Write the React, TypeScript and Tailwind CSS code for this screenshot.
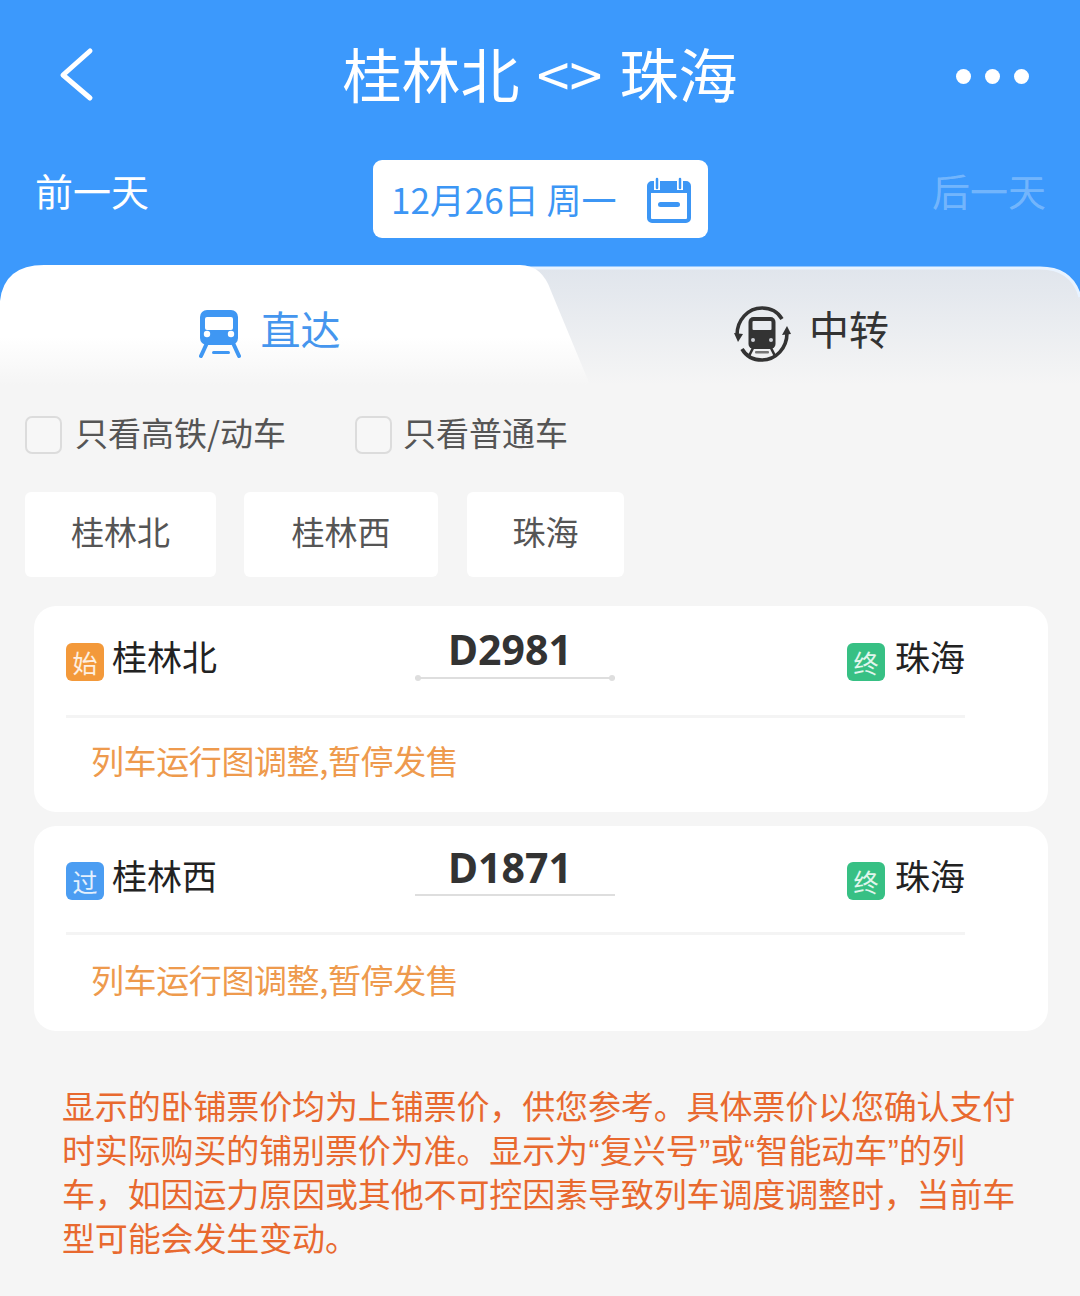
const FONT = "font-['Noto_Sans_CJK_SC','Noto_Sans',sans-serif]";

const trains = [
  {
    from: "桂林北",
    tag: "始",
    tagClass: "bg-[#f3993a]",
    code: "D2981",
    dots: true,
    cardClass: "h-[206px]",
    headClass: "h-[112px]",
    stationClass: "top-[37px]",
    codeClass: "leading-[56px]",
    noteClass: "pt-[22px]",
  },
  {
    from: "桂林西",
    tag: "过",
    tagClass: "bg-[#4b9df2]",
    code: "D1871",
    dots: false,
    cardClass: "h-[205px]",
    headClass: "h-[109px]",
    stationClass: "top-[36px]",
    codeClass: "leading-[53px]",
    noteClass: "pt-[24px]",
  },
];

const chips = [
  { name: "桂林北", className: "w-[191px]" },
  { name: "桂林西", className: "w-[194px]" },
  { name: "珠海", className: "ml-[1px] w-[157px]" },
];

function CalendarIcon() {
  return (
    <svg width="46" height="46" viewBox="0 0 46 46" fill="none">
      <rect x="3" y="6" width="40" height="38" rx="3" stroke="#3c96f5" strokeWidth="4" />
      <path d="M3 6h40v10H3z" fill="#3c96f5" />
      <path d="M11 2v11M34 2v11" stroke="white" strokeWidth="6" />
      <path d="M11 2v9M34 2v9" stroke="#3c96f5" strokeWidth="2.5" strokeLinecap="round" />
      <rect x="12" y="25" width="22" height="5" rx="2.5" fill="#3c96f5" />
    </svg>
  );
}

function DirectIcon() {
  return (
    <svg width="44" height="48" viewBox="0 0 44 48" fill="none">
      <path d="M9 33 3 46M35 33l6 13" stroke="#3f97f3" strokeWidth="4" strokeLinecap="round" />
      <rect x="14" y="41" width="18" height="3" rx="1.5" fill="#3f97f3" />
      <rect x="2" y="0" width="38" height="35" rx="7" fill="#3f97f3" />
      <rect x="7" y="7" width="28" height="13" rx="2" fill="white" />
      <circle cx="9" cy="24" r="3.2" fill="white" />
      <circle cx="33" cy="24" r="3.2" fill="white" />
    </svg>
  );
}

function TransferIcon() {
  return (
    <svg width="58" height="60" viewBox="0 0 58 60" fill="none">
      <path d="M4 31C4 16 15 4 29 4c9 0 16 4 20 11" stroke="#333" strokeWidth="3.6" />
      <path d="M54 29c0 15-11 27-25 27-9 0-16-4-20-11" stroke="#333" strokeWidth="3.6" />
      <path d="m1 29 4 9 5-8zM49 31l5-9 4 8z" fill="#333" />
      <path d="m20 44-4 8M38 44l4 8" stroke="#333" strokeWidth="2.6" strokeLinecap="round" />
      <rect x="22" y="47" width="14" height="2.5" rx="1" fill="#777" />
      <rect x="15.500" y="13" width="27" height="32" rx="5" fill="#333" />
      <rect x="19.500" y="17" width="19" height="9" rx="1" fill="#e8ebf0" />
      <circle cx="20" cy="36" r="2" fill="#d0d3d8" />
      <circle cx="38" cy="36" r="2" fill="#d0d3d8" />
    </svg>
  );
}

function TabShape() {
  return (
    <svg className="absolute inset-0" width="1080" height="120" viewBox="0 0 1080 120" fill="none">
      <defs>
        <linearGradient id="left" x1="0" y1="0" x2="0" y2="1">
          <stop offset="0.6" stopColor="#ffffff" />
          <stop offset="1" stopColor="#f5f5f5" />
        </linearGradient>
        <linearGradient id="right" x1="0" y1="0" x2="0" y2="1">
          <stop offset="0" stopColor="#e0e5ec" />
          <stop offset="1" stopColor="#f5f5f5" />
        </linearGradient>
      </defs>
      <path d="M500 3H1040Q1072 3 1080 32V120H500Z" fill="url(#right)" />
      <path d="M500 3H1040Q1072 3 1080 32" stroke="#e8f3ff" strokeWidth="3" />
      <path d="M0 36Q4 0 44 0H520Q542 0 551 26L590 120H0Z" fill="url(#left)" />
    </svg>
  );
}

function Checkbox({ label, className }: { label: string; className: string }) {
  return (
    <div className={`flex items-center ${className}`}>
      <div className="h-[38px] w-[37px] rounded-[7px] border-2 border-[#dcdcdc] bg-[#f7f7f7]" />
      <span className="-mt-[6px] text-[33px] leading-[38px] text-[#555]">{label}</span>
    </div>
  );
}

function Badge({ text, className }: { text: string; className: string }) {
  return (
    <span className={`flex h-[38px] w-[38px] items-center justify-center rounded-[6px] text-[25px] leading-none text-white/85 ${className}`}>
      {text}
    </span>
  );
}

function TrainCard({ train }: { train: (typeof trains)[number] }) {
  return (
    <div className={`rounded-[22px] bg-white pl-[32px] pr-[83px] ${train.cardClass}`}>
      <div className={`relative border-b-[3px] border-[#f4f4f4] ${train.headClass}`}>
        <div className={`absolute left-0 flex items-center gap-[8px] ${train.stationClass}`}>
          <Badge text={train.tag} className={train.tagClass} />
          <span className="-mt-[12px] text-[35px] leading-[38px] text-[#222]">{train.from}</span>
        </div>
        <div className="absolute left-[349px] top-[15px] w-[200px] text-center">
          <div className={`pr-[10px] font-['Noto_Sans',sans-serif] text-[41px] font-bold text-[#333] ${train.codeClass}`}>
            {train.code}
          </div>
          <div className="relative h-[2px] bg-[#dedede]">
            {train.dots && (
              <>
                <span className="absolute -top-[2px] left-0 h-[6px] w-[6px] rounded-full bg-[#dedede]" />
                <span className="absolute -top-[2px] right-0 h-[6px] w-[6px] rounded-full bg-[#dedede]" />
              </>
            )}
          </div>
        </div>
        <div className={`absolute right-0 flex items-center gap-[10px] ${train.stationClass}`}>
          <Badge text="终" className="bg-[#37c084]" />
          <span className="-mt-[12px] text-[35px] leading-[38px] text-[#222]">珠海</span>
        </div>
      </div>
      <p className={`pl-[25px] text-[33px] leading-[40px] tracking-[-0.4px] text-[#ee9a4d] ${train.noteClass}`}>
        列车运行图调整,暂停发售
      </p>
    </div>
  );
}

function Quote({ children }: { children: string }) {
  return <span className="mx-[0.6px] font-['Liberation_Sans',sans-serif] leading-[0]">{children}</span>;
}

export default function App() {
  return (
    <div className={`h-[1296px] w-[1080px] overflow-hidden bg-[#f5f5f5] ${FONT}`}>
      <header className="h-[265px] bg-[#3c99fc] px-[36px] text-white">
        <div className="relative flex h-[152px] items-center justify-center">
          <svg className="absolute left-[20px] top-[46px]" width="40" height="56" viewBox="0 0 40 56" fill="none">
            <path d="M34 5 7 29l27 23" stroke="white" strokeWidth="5" strokeLinecap="round" strokeLinejoin="round" />
          </svg>
          <h1 className="-mt-[6px] text-[59px] font-normal leading-[70px] [word-spacing:4px]">桂林北 &lt;&gt; 珠海</h1>
          <div className="absolute right-[15px] top-[69px] flex gap-[14px]">
            <span className="h-[15px] w-[15px] rounded-full bg-white" />
            <span className="h-[15px] w-[15px] rounded-full bg-white" />
            <span className="h-[15px] w-[15px] rounded-full bg-white" />
          </div>
        </div>
        <div className="flex items-start justify-between">
          <span className="-ml-[1px] mt-[13px] text-[38px] leading-[50px]">前一天</span>
          <div className="mt-[8px] flex h-[78px] w-[335px] items-center gap-[31px] rounded-[9px] bg-white pl-[18px]">
            <span className="whitespace-nowrap text-[35px] leading-[44px] text-[#3c96f5]">12月26日 周一</span>
            <span className="-ml-[2px] mt-[2px]"><CalendarIcon /></span>
          </div>
          <span className="-mr-[2px] mt-[13px] text-[38px] leading-[50px] text-white/30">后一天</span>
        </div>
      </header>

      <div className="relative grid h-[120px] grid-cols-2 bg-[#3c99fc]">
        <TabShape />
        <div className="relative flex h-[120px] items-center justify-center gap-[19px] pr-[2px] pt-[6px]">
          <span className="mt-[12px]"><DirectIcon /></span>
          <span className="text-[40px] leading-[48px] text-[#4596ee]">直达</span>
        </div>
        <div className="relative flex h-[120px] items-center justify-center gap-[18px] pl-[2px] pt-[6px]">
          <span className="mt-[12px]"><TransferIcon /></span>
          <span className="text-[40px] leading-[48px] text-[#333]">中转</span>
        </div>
      </div>

      <div className="flex items-center px-[25px] pt-[31px]">
        <Checkbox label="只看高铁/动车" className="w-[330px] gap-[13px]" />
        <Checkbox label="只看普通车" className="gap-[11px]" />
      </div>

      <div className="flex gap-[28px] px-[25px] pt-[38px]">
        {chips.map((chip) => (
          <div key={chip.name} className={`flex h-[85px] items-center justify-center rounded-[6px] bg-white pb-[6px] text-[33px] text-[#555] ${chip.className}`}>
            {chip.name}
          </div>
        ))}
      </div>

      <div className="flex flex-col gap-[14px] pl-[34px] pr-[32px] pt-[29px]">
        {trains.map((train) => (
          <TrainCard key={train.code} train={train} />
        ))}
      </div>

      <p className="whitespace-nowrap pl-[62px] pt-[52px] text-[33px] leading-[44px] tracking-[-0.13px] text-[#e8692f]">
        显示的卧铺票价均为上铺票价，供您参考。具体票价以您确认支付
        <br />
        时实际购买的铺别票价为准。显示为<Quote>“</Quote>复兴号<Quote>”</Quote>或<Quote>“</Quote>智能动车<Quote>”</Quote>的列
        <br />
        车，如因运力原因或其他不可控因素导致列车调度调整时，当前车
        <br />
        型可能会发生变动。
      </p>
    </div>
  );
}
